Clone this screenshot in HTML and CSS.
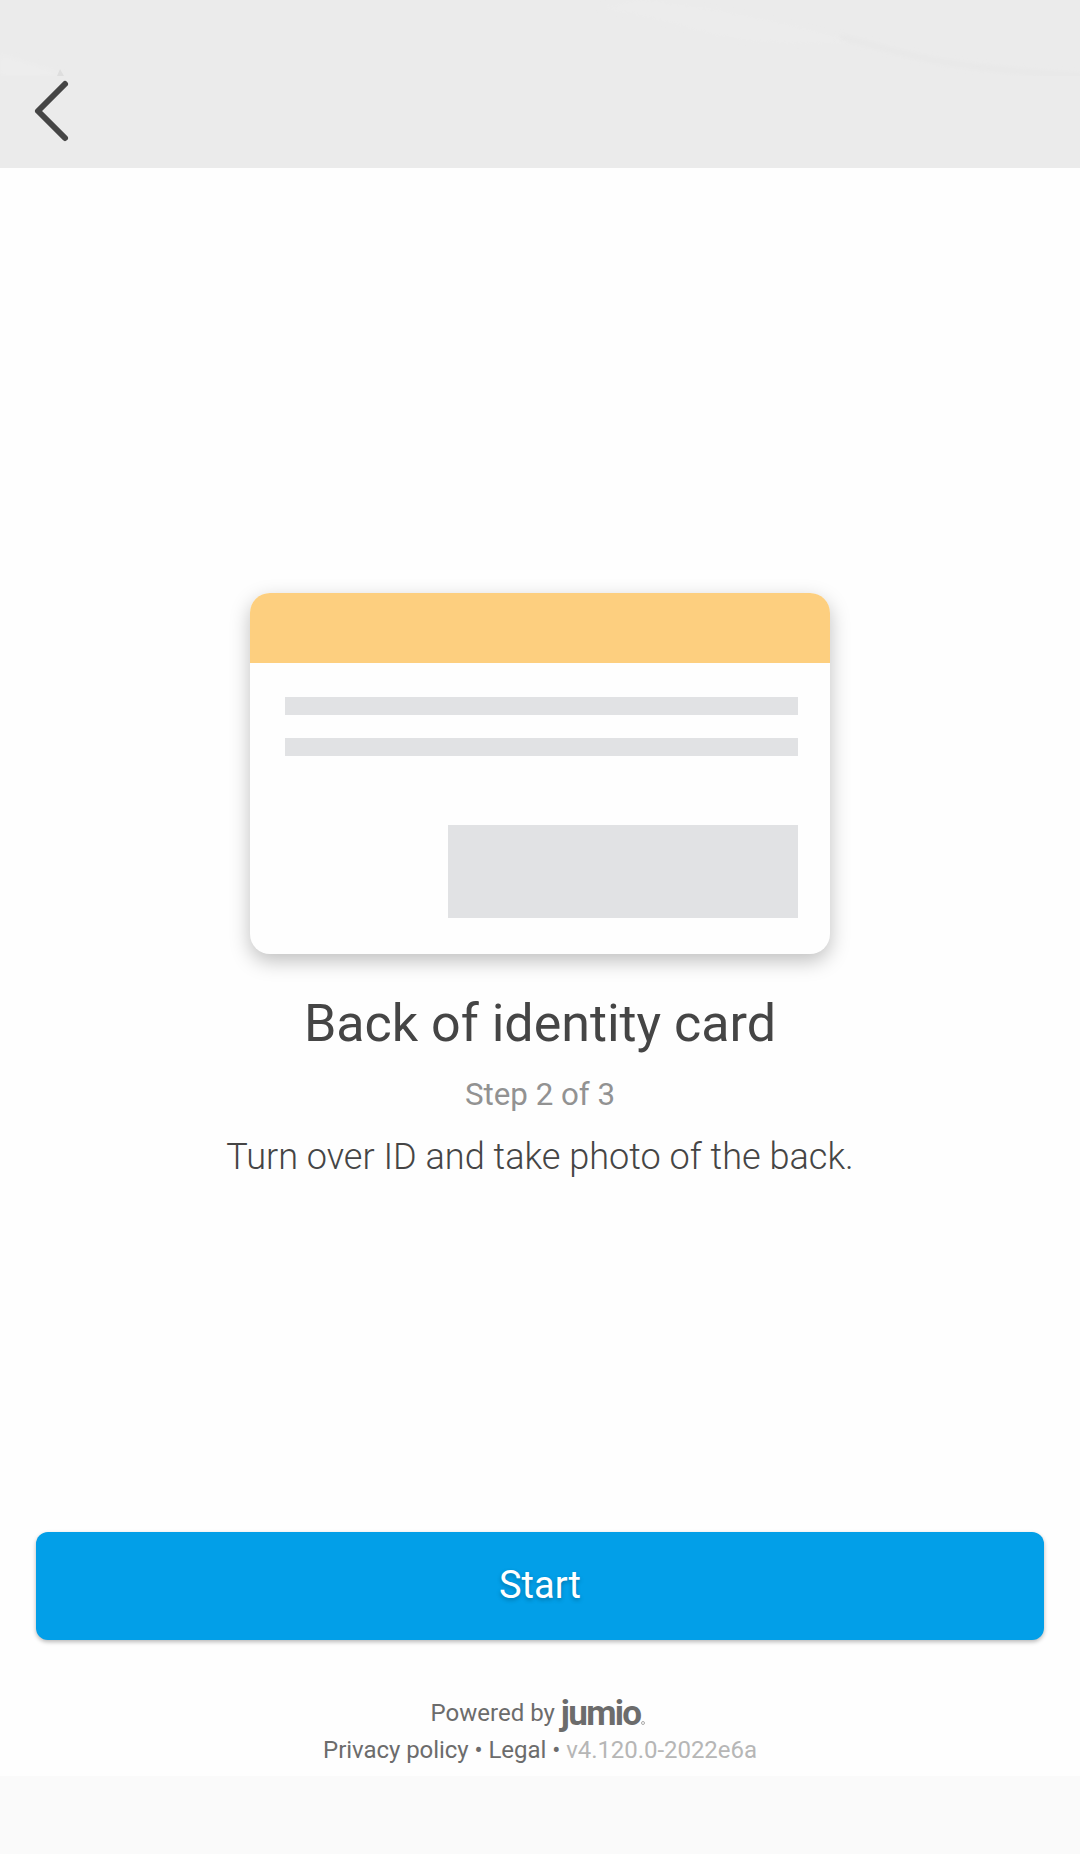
FILE: index.html
```html
<!DOCTYPE html>
<html lang="en">
<head>
<meta charset="utf-8">
<title>Back of identity card</title>
<link rel="stylesheet" href="styles.css">
</head>
<body>
<header class="topbar">
  <svg class="swoosh" viewBox="0 0 1080 168" aria-hidden="true">
    <defs><filter id="soft" x="-10%" y="-20%" width="120%" height="140%"><feGaussianBlur stdDeviation="2.5"/></filter></defs>
    <path d="M600 8 C670 15 700 40 785 42 Q835 43 856 43 Q810 29 740 15 Q680 4 640 0" fill="#ececec" filter="url(#soft)"/>
    <path d="M840 37 C870 43 900 55 950 63 S1030 72 1090 77" fill="none" stroke="#e7e7e7" stroke-width="4" filter="url(#soft)"/>
    <path d="M0 54 L60 73 L58 76 H0Z" fill="#ededed" filter="url(#soft)"/>
    <path d="M60 69 l4 7 h-7z" fill="#dedede"/>
    <rect y="76" width="1080" height="92" fill="#ebebeb"/>
  </svg>
  <button class="back" aria-label="Back">
    <svg width="38" height="64" viewBox="0 0 38 64"><path d="M33 5 L6 32 L33 59" fill="none" stroke="#454545" stroke-width="6" stroke-linecap="round" stroke-linejoin="round"/></svg>
  </button>
</header>
<main class="content">
  <div class="card" aria-hidden="true">
    <div class="stripe"></div>
    <div class="card-body">
      <div class="line"></div>
      <div class="line"></div>
      <div class="block"></div>
    </div>
  </div>
  <h1 class="title">Back of identity card</h1>
  <p class="step">Step 2 of 3</p>
  <p class="hint">Turn over ID and take photo of the back.</p>
</main>
<button class="start">Start</button>
<footer class="footer">
  <div class="powered"><span class="by">Powered by</span><span class="logo">jumio</span><i class="mark"></i></div>
  <div class="links">Privacy policy • Legal • <span class="version">v4.120.0-2022e6a</span></div>
</footer>
<div class="navbar"></div>
</body>
</html>
```
FILE: styles.css
```css
* { box-sizing: border-box; }
body {
  margin: 0;
  height: 1854px;
  display: flex;
  flex-direction: column;
  background: #fefefe;
  color: #454545;
  font-family: Roboto, sans-serif;
}
.topbar {
  position: relative;
  flex: none;
  height: 168px;
  padding: 79px 0 0 32px;
  background: #ebebeb;
}
.swoosh { position: absolute; inset: 0; width: 1080px; height: 168px; }
.back { position: relative; display: block; padding: 0; border: 0; background: none; height: 64px; }
.back svg { display: block; }
.content {
  flex: 1;
  display: flex;
  flex-direction: column;
  align-items: center;
  padding-top: 425px;
}
.card {
  flex: none;
  width: 580px;
  height: 361px;
  border-radius: 20px;
  background: #fefefe;
  overflow: hidden;
  box-shadow: 0 7px 20px rgba(0, 0, 0, .25);
}
.stripe { height: 70px; background: #fdcf7f; }
.card-body { display: flex; flex-direction: column; padding: 34px 32px 0 35px; }
.line { height: 18px; margin-bottom: 23px; background: #e1e2e4; }
.block { width: 350px; height: 93px; margin-top: 46px; align-self: flex-end; background: #e1e2e4; }
.title, .step, .hint { margin: 0; text-align: center; white-space: nowrap; }
.title { margin-top: 40px; font-size: 52px; font-weight: 400; line-height: 60px; }
.step { margin-top: 23px; font-size: 31.3px; line-height: 36px; color: #929292; }
.hint { margin-top: 22px; font-size: 36.1px; font-weight: 300; line-height: 44px; }
.start {
  flex: none;
  height: 108px;
  margin: 0 36px;
  padding: 0 0 3px;
  border: 0;
  border-radius: 12px;
  background: #029fe8;
  box-shadow: 0 2px 4px rgba(0, 0, 0, .28);
  color: #fff;
  font-family: inherit;
  font-size: 38px;
  text-shadow: 0 2px 4px rgba(0, 0, 0, .25);
}
.footer {
  flex: none;
  height: 136px;
  padding-top: 54px;
  color: #6c6c6c;
  font-size: 24px;
}
.powered {
  display: flex;
  justify-content: center;
  align-items: baseline;
  height: 38px;
  padding-right: 4px;
  line-height: 40px;
}
.by { transform: translateY(-4px); }
.logo { margin-left: 6px; font-size: 35px; font-weight: 700; letter-spacing: -1.7px; }
.mark { width: 4px; height: 4px; margin-left: 1px; border: 1px solid #aaa; border-radius: 50%; }
.links { height: 36px; line-height: 36px; letter-spacing: -.05px; text-align: center; white-space: nowrap; }
.version { color: #b6b6b6; }
.navbar { flex: none; height: 78px; background: #fafafa; }
```
